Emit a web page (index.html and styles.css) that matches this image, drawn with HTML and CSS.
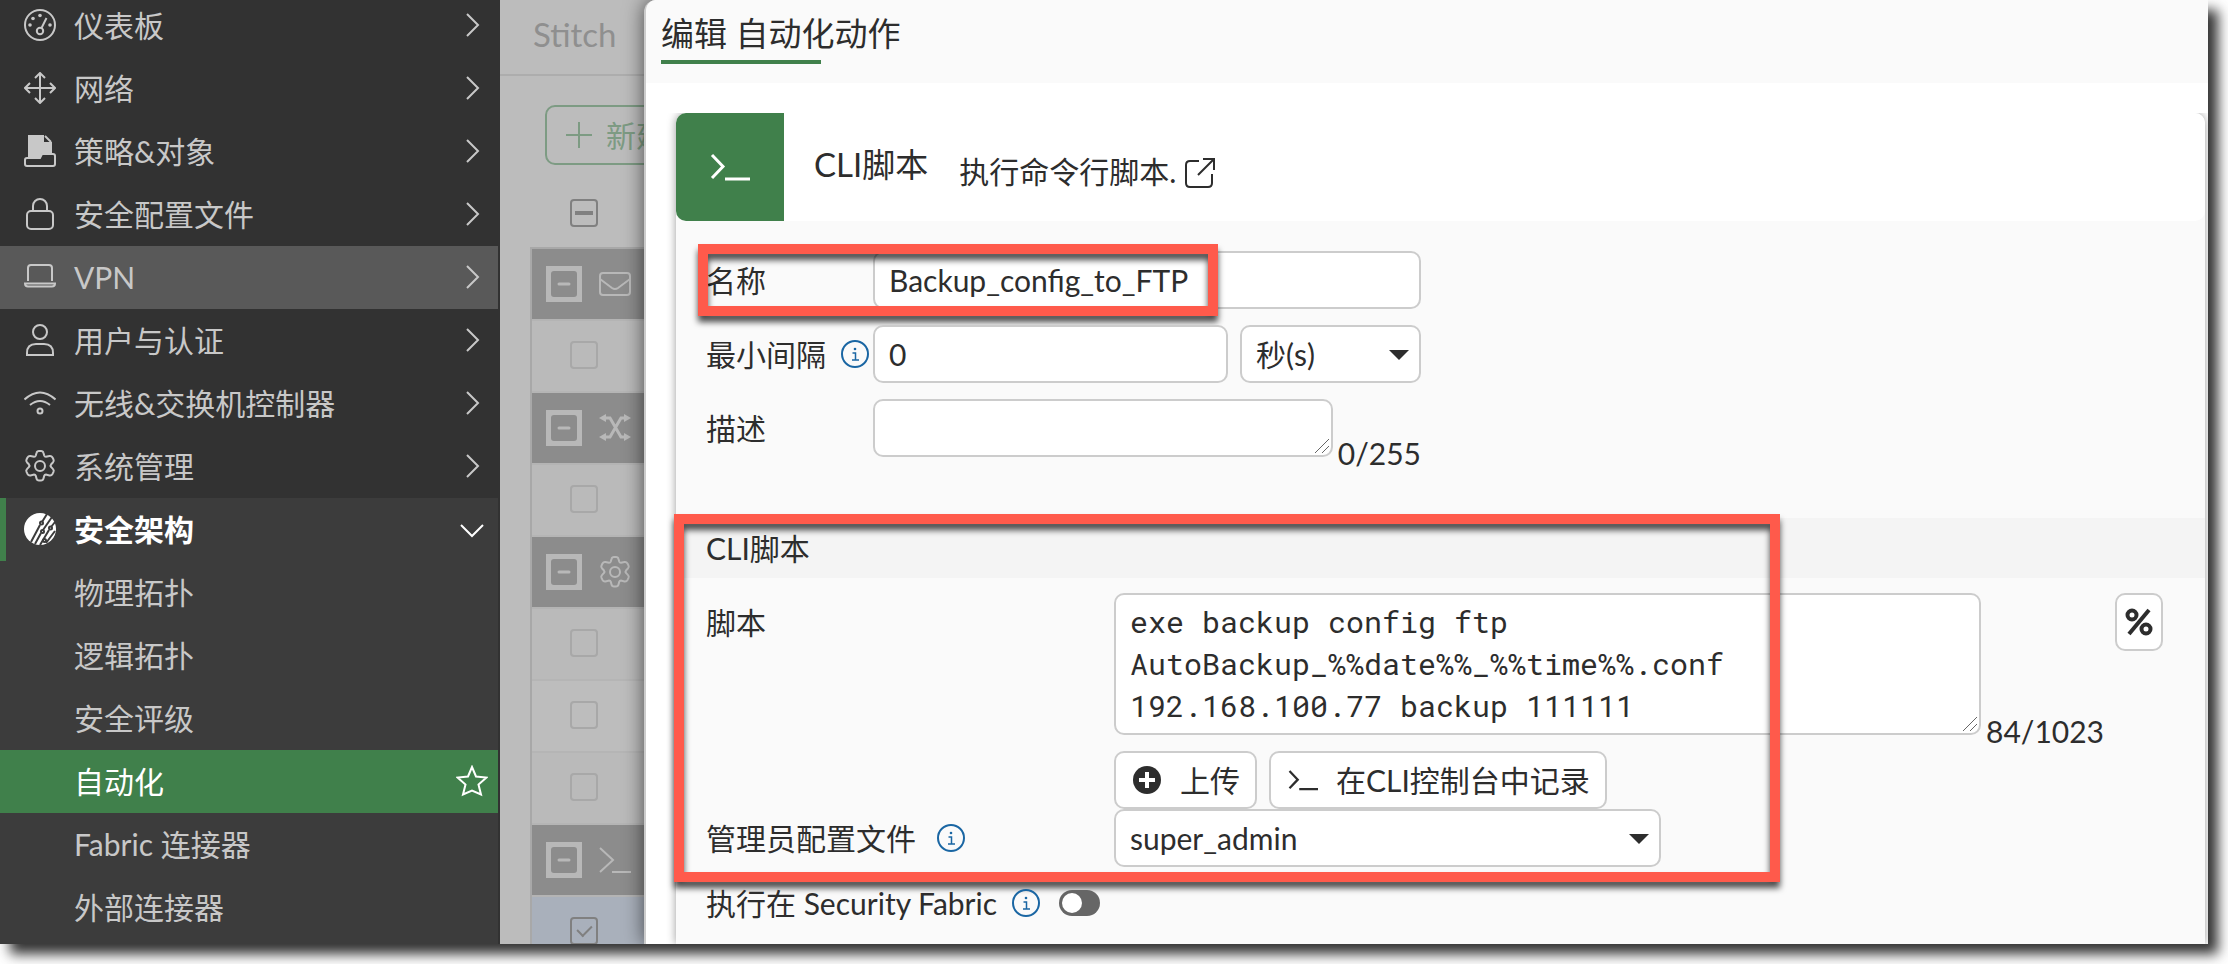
FILE: index.html
```html
<!DOCTYPE html>
<html lang="zh-CN">
<head>
<meta charset="UTF-8">
<meta name="viewport" content="width=device-width, initial-scale=1.0">
<title>编辑 自动化动作</title>
<link rel="stylesheet" href="styles.css">
</head>
<body>

<!-- Shared icons -->
<svg class="icon-defs" aria-hidden="true">
  <symbol id="i-right" viewBox="0 0 24 24"><path d="M7 1l11 11L7 23"/></symbol>
  <symbol id="i-down" viewBox="0 0 24 24"><path d="M1 8l11 11L23 8"/></symbol>
  <symbol id="i-gear" viewBox="0 0 32 32">
    <path d="M15 1h2q2 0 2.500 2l.7 2.500q.4 1.300 1.700 1.300l3.600-.8q2-.3 3 1.500l1 2q.8 1.700-.6 3l-1.700 1.700q-1.200 1.300 0 3l1.700 1.700q1.400 1.300.6 3l-1 2q-1 1.800-3 1.500l-3.600-.8q-1.300 0-1.700 1.300l-.7 2.600q-.5 2-2.500 2h-2q-2 0-2.500-2l-.7-2.600q-.4-1.300-1.700-1.300l-3.600.8q-2 .3-3-1.500l-1-2q-.8-1.700.6-3l1.700-1.700q1.200-1.700 0-3L3.100 12.500q-1.400-1.300-.6-3l1-2q1-1.800 3-1.500l3.600.8q1.300 0 1.700-1.300l.7-2.500q.5-2 2.500-2z"/>
    <circle cx="16" cy="16" r="5"/>
  </symbol>
  <symbol id="i-prompt" viewBox="0 0 32 26"><path d="M1 1l13 12L1 25M13 25h19"/></symbol>
  <symbol id="i-cli" viewBox="0 0 40 28"><path d="M2 2l11 11.500L2 25M15 26h25"/></symbol>
  <symbol id="i-collapse" viewBox="0 0 36 36"><rect class="ring" x="2" y="2" width="32" height="32"/><path class="ring" d="M3 7V3h4M29 3h4v4M33 29v4h-4M7 33H3v-4"/><rect class="ring" x="3" y="3" width="30" height="30" rx="5"/><path d="M13 18h10" stroke-width="3" stroke-linecap="round"/></symbol>
  <symbol id="i-info" viewBox="0 0 28 28">
    <circle cx="14" cy="14" r="13"/>
    <path class="thin" d="M11.500 13h3v6.500M11 20h7"/>
    <circle class="dot" cx="14" cy="9" r="1.300"/>
  </symbol>
</svg>

<div class="app">
  <nav class="sidebar">
    <ul class="menu">
      <li><a href="#" class="menu-item">
        <svg class="icon" viewBox="0 0 32 32"><circle cx="16" cy="16" r="15"/><circle cx="16" cy="22" r="3.200"/><path d="M17.500 19l5-10"/><g class="solid"><circle cx="16" cy="6.500" r="1.800"/><circle cx="9" cy="9.500" r="1.800"/><circle cx="6" cy="16" r="1.800"/><circle cx="26" cy="16" r="1.800"/></g></svg>
        <span>仪表板</span><svg class="arrow"><use href="#i-right"/></svg></a></li>
      <li><a href="#" class="menu-item">
        <svg class="icon" viewBox="0 0 32 32"><path d="M16 1v30M1 16h30M11 6l5-5 5 5M11 26l5 5 5-5M6 11l-5 5 5 5M26 11l5 5-5 5"/></svg>
        <span>网络</span><svg class="arrow"><use href="#i-right"/></svg></a></li>
      <li><a href="#" class="menu-item">
        <svg class="icon" viewBox="0 0 32 32"><path class="solid" d="M4 0h16v7h8v11H18l-1.500 4H4z"/><path d="M21 1l6 6"/><path d="M4 23h12l2-4h11q2 0 2 2v8q0 2-2 2H3q-2 0-2-2v-4q0-2 2-2z"/></svg>
        <span>策略&amp;对象</span><svg class="arrow"><use href="#i-right"/></svg></a></li>
      <li><a href="#" class="menu-item">
        <svg class="icon" viewBox="0 0 32 32"><rect x="3" y="13" width="26" height="18" rx="4"/><path d="M9 13V8a7 7 0 0 1 14 0v5"/></svg>
        <span>安全配置文件</span><svg class="arrow"><use href="#i-right"/></svg></a></li>
      <li><a href="#" class="menu-item hover">
        <svg class="icon" viewBox="0 0 32 32"><path d="M4 20V7q0-3 3-3h18q3 0 3 3v13M1 22.500h30q0 3-3 3H4q-3 0-3-3z"/></svg>
        <span>VPN</span><svg class="arrow"><use href="#i-right"/></svg></a></li>
      <li><a href="#" class="menu-item">
        <svg class="icon" viewBox="0 0 32 32"><circle cx="16" cy="8" r="7"/><path d="M3 31v-2q0-9 9-9h8q9 0 9 9v2z"/></svg>
        <span>用户与认证</span><svg class="arrow"><use href="#i-right"/></svg></a></li>
      <li><a href="#" class="menu-item">
        <svg class="icon" viewBox="0 0 32 32"><path d="M.5 12.500q15.500-14 31 0M6 18q10-8 20 0"/><circle cx="16" cy="24" r="2.500"/></svg>
        <span>无线&amp;交换机控制器</span><svg class="arrow"><use href="#i-right"/></svg></a></li>
      <li><a href="#" class="menu-item">
        <svg class="icon"><use href="#i-gear"/></svg>
        <span>系统管理</span><svg class="arrow"><use href="#i-right"/></svg></a></li>
      <li class="open">
        <a href="#" class="menu-item current">
          <svg class="icon" viewBox="0 0 32 32"><circle class="solid" cx="16" cy="16" r="16"/><g class="cut"><path d="M23 1l-5 8M16 12L7 29M28 4l-9 13M17 20l-6 11M31 9l-4 5M25 17l-9 15M31 18l-9 12"/><circle cx="17.500" cy="10" r="1.500"/><circle cx="18.500" cy="18.500" r="1.500"/><circle cx="26.500" cy="15" r="1.500"/><circle cx="20.500" cy="27.500" r="1.500"/></g></svg>
          <span>安全架构</span><svg class="arrow"><use href="#i-down"/></svg></a>
        <ul class="submenu">
          <li><a href="#" class="menu-item">物理拓扑</a></li>
          <li><a href="#" class="menu-item">逻辑拓扑</a></li>
          <li><a href="#" class="menu-item">安全评级</a></li>
          <li><a href="#" class="menu-item active"><span>自动化</span>
            <svg class="star" viewBox="0 0 32 32"><path d="M16 2l4 9.500 10.500 1-8 7 2.500 10-9-4-9 4 2.500-10-8-7 10.500-1z"/></svg></a></li>
          <li><a href="#" class="menu-item">Fabric 连接器</a></li>
          <li><a href="#" class="menu-item">外部连接器</a></li>
        </ul>
      </li>
    </ul>
  </nav>

  <main class="main">
    <!-- List behind the drawer -->
    <div class="tabs">Stitch</div>
    <div class="toolbar">
      <button type="button" class="btn-new"><svg viewBox="0 0 26 26"><path d="M13 0v26M0 13h26"/></svg>新建</button>
    </div>
    <div class="list-head"><input type="checkbox" class="check partial" aria-label="全选"></div>
    <div class="list">
      <div class="group"><button type="button" class="collapse" aria-label="折叠"><svg><use href="#i-collapse"/></svg></button>
        <svg class="icon" viewBox="0 0 32 32"><rect x="1" y="5" width="30" height="22" rx="3"/><path d="M1 11l12 9q3 2 6 0l12-9"/></svg></div>
      <div class="row"><input type="checkbox" class="check" aria-label="选择"></div>
      <div class="group"><button type="button" class="collapse" aria-label="折叠"><svg><use href="#i-collapse"/></svg></button>
        <svg class="icon thick" viewBox="0 0 32 32"><path d="M5 6h6l11 19h5M5 25h6L22 6h5"/><path class="solid" d="M0 6l7-4v8zM32 6l-7-4v8zM0 25l7-4v8zM32 25l-7-4v8z"/></svg></div>
      <div class="row"><input type="checkbox" class="check" aria-label="选择"></div>
      <div class="group"><button type="button" class="collapse" aria-label="折叠"><svg><use href="#i-collapse"/></svg></button>
        <svg class="icon"><use href="#i-gear"/></svg></div>
      <div class="row"><input type="checkbox" class="check" aria-label="选择"></div>
      <div class="row alt"><input type="checkbox" class="check" aria-label="选择"></div>
      <div class="row"><input type="checkbox" class="check" aria-label="选择"></div>
      <div class="group"><button type="button" class="collapse" aria-label="折叠"><svg><use href="#i-collapse"/></svg></button>
        <svg class="icon"><use href="#i-prompt"/></svg></div>
      <div class="row selected"><input type="checkbox" class="check" aria-label="选择" checked></div>
    </div>

    <!-- Edit drawer -->
    <section class="drawer">
      <header class="drawer-header"><h1>编辑 自动化动作</h1></header>
      <div class="drawer-body">
        <form class="panel">
          <div class="panel-header">
            <div class="panel-icon"><svg><use href="#i-cli"/></svg></div>
            <h2>CLI脚本</h2>
            <p>执行命令行脚本.</p>
            <a href="#" class="external" aria-label="打开"><svg viewBox="0 0 30 30"><path d="M14 3H5Q1 3 1 7v18q0 4 4 4h18q4 0 4-4v-9M18 1h11v11M29 1L13 17"/></svg></a>
          </div>

          <div class="fields">
            <div class="field">
              <label for="name">名称</label>
              <input type="text" id="name" class="control" value="Backup_config_to_FTP">
              <div class="mark mark-name"></div>
            </div>
            <div class="field">
              <label for="interval">最小间隔<svg class="info"><use href="#i-info"/></svg></label>
              <input type="text" id="interval" class="control" value="0">
              <div class="select unit"><select class="control" aria-label="单位"><option>秒(s)</option></select></div>
            </div>
            <div class="field">
              <label for="desc">描述</label>
              <div class="area">
                <textarea id="desc" class="control" rows="1"></textarea>
                <svg class="grip" viewBox="0 0 16 16"><path d="M1 15L15 1M8 15l7-7"/></svg>
              </div>
              <span class="counter">0/255</span>
            </div>
          </div>

          <div class="section">
            <h3>CLI脚本</h3>
            <div class="field">
              <label for="script">脚本</label>
              <div class="area">
                <textarea id="script" class="control mono" rows="3">exe backup config ftp
AutoBackup_%%date%%_%%time%%.conf
192.168.100.77 backup 111111</textarea>
                <svg class="grip" viewBox="0 0 16 16"><path d="M1 15L15 1M8 15l7-7"/></svg>
              </div>
              <span class="counter">84/1023</span>
              <button type="button" class="btn btn-var" aria-label="变量"><svg viewBox="0 0 28 28"><circle cx="7" cy="7" r="4.500"/><circle cx="21" cy="21" r="4.500"/><path d="M24 2L4 26"/></svg></button>
            </div>
            <div class="actions">
              <button type="button" class="btn"><svg class="plus" viewBox="0 0 28 28"><circle cx="14" cy="14" r="14"/><path d="M14 6v16M6 14h16"/></svg>上传</button>
              <button type="button" class="btn"><svg class="prompt"><use href="#i-cli"/></svg>在CLI控制台中记录</button>
            </div>
            <div class="field">
              <label for="profile">管理员配置文件<svg class="info"><use href="#i-info"/></svg></label>
              <div class="select profile"><select id="profile" class="control"><option>super_admin</option></select></div>
            </div>
            <div class="mark mark-script"></div>
          </div>

          <div class="field fabric">
            <label for="fabric">执行在 Security Fabric<svg class="info"><use href="#i-info"/></svg></label>
            <input type="checkbox" id="fabric" class="toggle">
          </div>
        </form>
      </div>
    </section>
  </main>
</div>

</body>
</html>
```

FILE: styles.css
```css
* {
  box-sizing: border-box;
}

body {
  margin: 0;
  padding: 0 20px 20px 0;
  height: 100vh;
  overflow: hidden;
  background: #fff;
  color: #2d2d2d;
  font-family: Lato, "Noto Sans CJK SC", sans-serif;
  font-size: 30px;
  line-height: 42px;
}

input, select, textarea, button {
  font: inherit;
  color: inherit;
  margin: 0;
}

ul {
  list-style: none;
  margin: 0;
  padding: 0;
}

h1, h2, h3, p {
  margin: 0;
  font-weight: normal;
}

svg {
  display: block;
  flex: none;
  fill: none;
  stroke: currentColor;
  stroke-width: 2;
}

.solid {
  fill: currentColor;
  stroke: none;
}

.icon-defs {
  position: absolute;
  width: 0;
  height: 0;
}

.icon {
  width: 32px;
  height: 32px;
}

.app {
  display: flex;
  height: 100%;
  box-shadow: 10px 10px 12px rgba(0, 0, 0, 0.8);
}

/* Sidebar */
.sidebar {
  width: 500px;
  flex: none;
  padding-right: 2px;
  overflow: hidden;
  background: #323232;
  color: #c8c8c8;
}

/* menu is scrolled down a little */
.menu {
  margin-top: -6px;
}

.menu-item {
  display: flex;
  align-items: center;
  height: 63px;
  padding: 0 14px 1px 24px;
  color: inherit;
  text-decoration: none;
}

.menu-item .icon {
  margin-right: 18px;
}

.menu-item .arrow {
  width: 24px;
  height: 24px;
  margin-left: auto;
}

.menu-item.hover {
  background: #595959;
}

.open {
  background: #3c3c3c;
  padding-bottom: 10px;
}

.menu-item.current {
  border-left: 6px solid #40804b;
  padding-left: 18px;
  color: #fff;
  font-weight: bold;
}

.cut {
  stroke: #3c3c3c;
}

.submenu .menu-item {
  padding-left: 74px;
}

.submenu .active {
  background: #40804b;
  color: #fff;
}

.star {
  width: 32px;
  height: 32px;
  margin-left: auto;
  margin-right: -4px;
}

/* List page */
.main {
  position: relative;
  flex: 1;
  min-width: 0;
  overflow: hidden;
  background: #bcbcbc;
  color: #8f8f8f;
}

.tabs {
  height: 76px;
  padding: 13px 33px;
  border-bottom: 2px solid #adadad;
  font-size: 33px;
}

.toolbar {
  padding: 29px 45px 0;
}

.btn-new {
  display: flex;
  align-items: center;
  gap: 14px;
  height: 60px;
  padding: 0 19px;
  border: 2px solid #7d9b83;
  border-radius: 10px;
  background: none;
  color: #7d9b83;
}

.btn-new svg {
  width: 26px;
  height: 26px;
}

.list-head {
  padding: 34px 70px 20px;
}

.check {
  appearance: none;
  position: relative;
  display: block;
  width: 28px;
  height: 28px;
  border: 2px solid #a8a8a8;
  border-radius: 4px;
}

.check.partial {
  border-color: #808080;
}

.check.partial::after {
  content: "";
  position: absolute;
  left: 3px;
  right: 3px;
  top: 10px;
  height: 4px;
  background: #808080;
}

.check:checked {
  border-color: #808080;
}

.check:checked::after {
  content: "";
  position: absolute;
  left: 8px;
  top: 3px;
  width: 7px;
  height: 12px;
  border: solid #808080;
  border-width: 0 2px 2px 0;
  transform: rotate(45deg);
}

.list {
  margin-left: 30px;
  border-top: 2px solid #a8a8a8;
  border-left: 2px solid #a8a8a8;
}

.group {
  display: flex;
  align-items: center;
  gap: 17px;
  height: 72px;
  padding-left: 14px;
  border-bottom: 2px solid #b4b4b4;
  background: #8c8c8c;
  color: #b8b8b8;
}

.collapse {
  padding: 0;
  border: none;
  background: none;
}

.collapse svg {
  width: 36px;
  height: 36px;
}

.ring {
  stroke-width: 4;
}

.thick {
  stroke-width: 3;
}

.row {
  height: 72px;
  padding: 20px 38px;
  border-bottom: 2px solid #b5b5b5;
  background: #bababa;
}

.row.alt {
  background: #bdbdbd;
}

.row.selected {
  background: #a9b0bb;
}

/* Drawer */
.drawer {
  position: absolute;
  top: 0;
  bottom: 0;
  left: 144px;
  right: 0;
  display: flex;
  flex-direction: column;
  border-left: 2px solid #ccc;
  border-top-left-radius: 12px;
  background: #fff;
  color: #2d2d2d;
  box-shadow: 0 0 20px rgba(0, 0, 0, 0.6);
}

.drawer-header {
  height: 83px;
  padding: 12px 15px 0;
  border-top-left-radius: 10px;
  background: #fafafa;
}

.drawer-header h1 {
  font-size: 33px;
}

.drawer-header h1::after {
  content: "";
  display: block;
  width: 160px;
  height: 4px;
  margin-top: 6px;
  background: #40804b;
}

.drawer-body {
  flex: 1;
  display: flex;
  margin-top: 30px;
  padding: 0 3px 0 30px;
  overflow: hidden;
}

.panel {
  flex: 1;
  min-width: 0;
  border-radius: 10px 10px 0 0;
  background: #fafafa;
  box-shadow: 0 0 10px rgba(0, 0, 0, 0.4);
}

.panel-header {
  display: flex;
  align-items: center;
  height: 108px;
  border-radius: 10px;
  background: #fff;
}

.panel-icon {
  display: flex;
  align-items: center;
  justify-content: center;
  width: 108px;
  height: 108px;
  margin-right: 30px;
  border-radius: 10px 0 0 10px;
  background: #40804b;
  color: #fff;
}

.panel-icon svg {
  width: 40px;
  height: 28px;
  stroke-width: 3;
}

.panel-header h2 {
  margin-right: 31px;
  padding-bottom: 6px;
  font-size: 33px;
}

.panel-header p {
  margin-right: 9px;
  padding-top: 8px;
}

.external {
  padding-top: 12px;
  color: inherit;
}

.external svg {
  width: 30px;
  height: 30px;
}

.fields {
  display: flex;
  flex-direction: column;
  gap: 16px;
  width: 745px;
  padding: 30px 0 61px;
}

.field {
  position: relative;
  display: flex;
  padding-left: 30px;
}

.field label {
  display: flex;
  align-items: center;
  flex: none;
  width: 167px;
  height: 58px;
}

.info {
  width: 28px;
  height: 28px;
  margin-left: 15px;
  color: #1a66a3;
}

.thin {
  stroke-width: 1.5;
}

.dot {
  fill: currentColor;
  stroke: none;
}

.control {
  display: block;
  flex: 1;
  min-width: 0;
  width: 100%;
  height: 58px;
  padding: 6px 14px;
  border: 2px solid #ccc;
  border-radius: 10px;
  background: #fff;
  outline: none;
}

.control.mono {
  height: 142px;
  font-family: "Roboto Mono", "DejaVu Sans Mono", monospace;
}

textarea.control {
  resize: none;
  overflow: hidden;
}

.area {
  position: relative;
  flex: 1;
  min-width: 0;
}

.grip {
  position: absolute;
  right: 3px;
  bottom: 3px;
  width: 16px;
  height: 16px;
  color: #666;
  stroke-width: 1;
}

.select {
  position: relative;
}

.select .control {
  appearance: none;
}

.select::after {
  content: "";
  position: absolute;
  right: 12px;
  top: 25px;
  border: 10px solid transparent;
  border-top-color: #2d2d2d;
  border-bottom: 0;
}

.unit {
  width: 181px;
  margin-left: 12px;
}

.profile {
  width: 547px;
}

/* counters hang below the text area */
.counter {
  align-self: flex-end;
  margin: 0 0 -17px 5px;
}

.section {
  position: relative;
}

.section h3 {
  height: 60px;
  margin-bottom: 15px;
  padding: 9px 30px;
  background: #f4f4f4;
  font-size: 30px;
}

.section .field {
  padding-right: 42px;
}

.section .field label {
  width: 408px;
}

.section .info {
  margin-left: 21px;
}

.btn {
  display: flex;
  align-items: center;
  height: 58px;
  padding: 0 15px 0 17px;
  border: 2px solid #ccc;
  border-radius: 10px;
  background: #fff;
}

.btn-var {
  width: 48px;
  margin-left: 11px;
  padding: 0;
  justify-content: center;
}

.btn-var svg {
  width: 28px;
  height: 28px;
  stroke-width: 4;
}

.actions {
  display: flex;
  gap: 12px;
  margin: 16px 0 0 438px;
}

.plus {
  width: 28px;
  height: 28px;
  margin-right: 19px;
  stroke: #fff;
  stroke-width: 4;
}

.plus circle {
  fill: #2d2d2d;
  stroke: none;
}

.prompt {
  width: 30px;
  height: 22px;
  margin-right: 18px;
  stroke-width: 3;
}

.fabric {
  align-items: center;
  margin-top: 7px;
}

.fabric.field label {
  width: auto;
}

.toggle {
  appearance: none;
  width: 41px;
  height: 26px;
  margin-left: 19px;
  padding: 3px;
  border-radius: 13px;
  background: #666;
}

.toggle::before {
  content: "";
  display: block;
  width: 20px;
  height: 20px;
  border-radius: 50%;
  background: #fff;
}

/* Highlight frames */
.mark {
  position: absolute;
  border: 10px solid #ff5a4b;
  pointer-events: none;
  filter: drop-shadow(0 6px 3px rgba(0, 0, 0, 0.7));
}

.mark-name {
  left: 22px;
  top: -7px;
  bottom: -7px;
  width: 520px;
}

.mark-script {
  left: -2px;
  top: -4px;
  bottom: -15px;
  width: 1106px;
}
```
